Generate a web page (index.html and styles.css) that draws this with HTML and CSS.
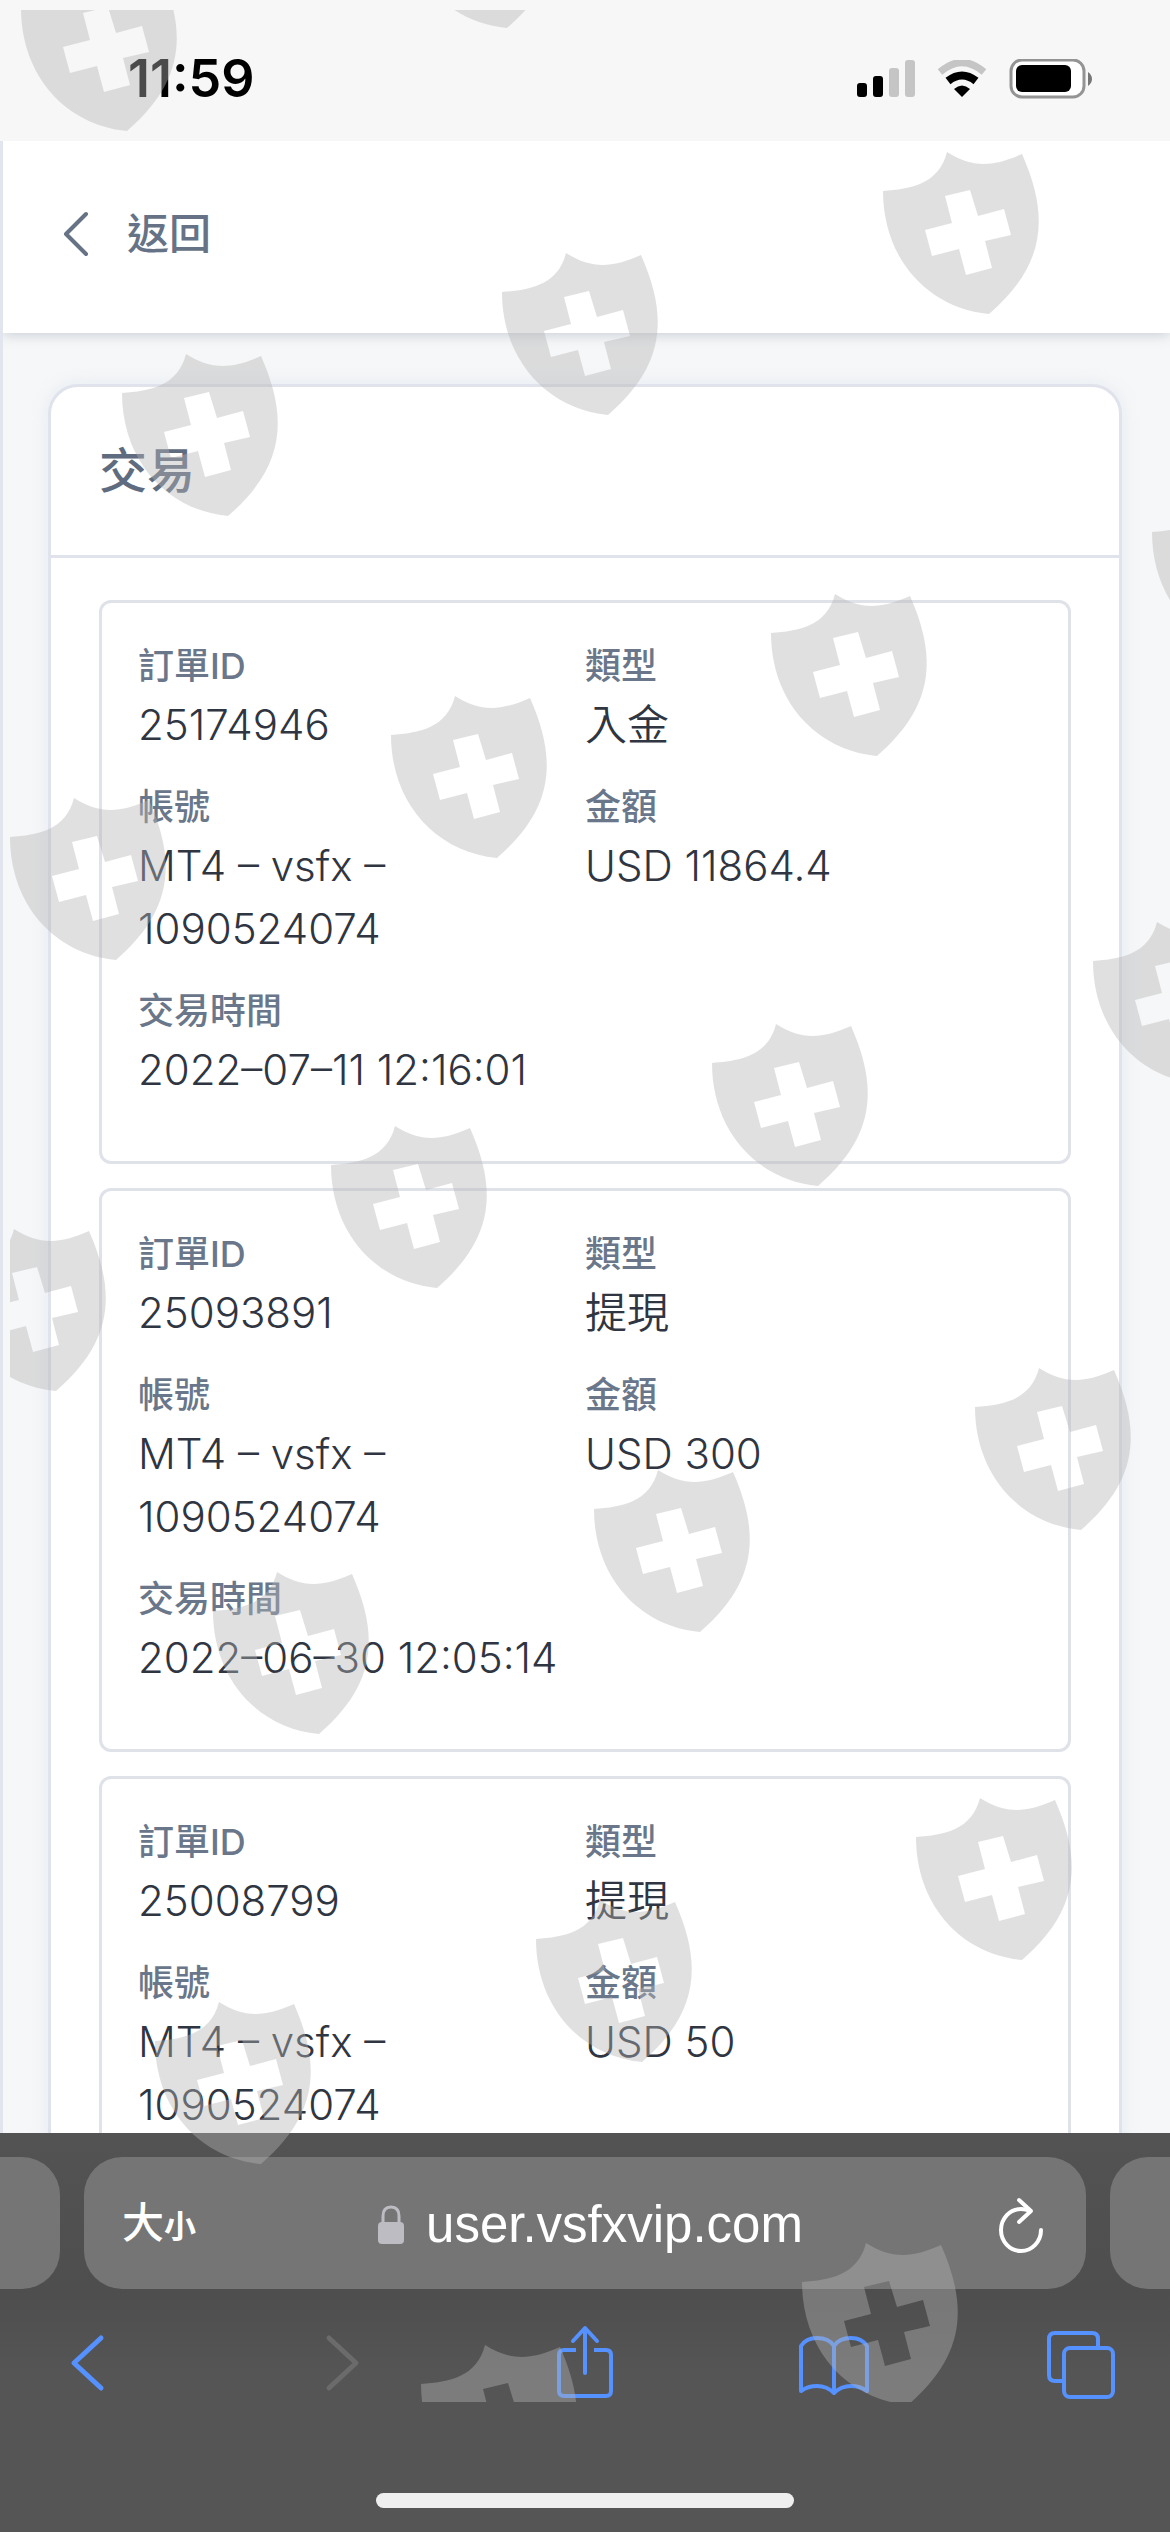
FILE: index.html
```html
<!DOCTYPE html>
<html lang="zh-Hant">
<head>
  <meta charset="UTF-8">
  <meta name="viewport" content="width=device-width, initial-scale=1">
  <title>交易</title>
  <link rel="stylesheet" href="styles.css">
</head>
<body>

<div class="status-bar">
  <span class="time">11:59</span>
  <div class="status-icons">
    <svg width="58" height="38" viewBox="0 0 58 38">
      <rect x="0" y="23" width="10" height="14" rx="3"/>
      <rect x="16" y="16" width="10" height="21" rx="3"/>
      <rect x="32" y="8" width="10" height="29" rx="3" fill="#c5c5c5"/>
      <rect x="48" y="0" width="10" height="37" rx="3" fill="#c5c5c5"/>
    </svg>
    <svg width="50" height="38" viewBox="0 0 50 38">
      <path d="M3 12 Q25 -7 47 12" fill="none" stroke="#c5c5c5" stroke-width="7"/>
      <path d="M11 21 Q25 10 39 21" fill="none" stroke="#000" stroke-width="8"/>
      <path d="M17 29 Q25 22 33 29 L25 37 Z"/>
    </svg>
    <svg width="83" height="40" viewBox="0 0 83 40">
      <rect x="2" y="1" width="73" height="37" rx="11" fill="#fff" stroke="#949494" stroke-width="3"/>
      <rect x="7" y="6" width="55" height="27" rx="6"/>
      <path d="M79 13 Q83 16 83 20 Q83 24 79 27 Z" fill="#777"/>
    </svg>
  </div>
</div>

<div class="page">
  <header class="page-header">
    <a href="#" class="back-link">
      <svg width="26" height="46" viewBox="0 0 26 46">
        <path d="M23 3 L3 23 L23 43" fill="none" stroke="currentColor" stroke-width="4" stroke-linecap="round" stroke-linejoin="round"/>
      </svg>
      <span>返回</span>
    </a>
  </header>

  <main>
    <section class="card">
      <h1 class="card-title">交易</h1>
      <div class="card-body">
        <dl class="record">
          <div><dt>訂單ID</dt><dd>25174946</dd></div>
          <div><dt>類型</dt><dd>入金</dd></div>
          <div><dt>帳號</dt><dd>MT4 – vsfx – 1090524074</dd></div>
          <div><dt>金額</dt><dd>USD 11864.4</dd></div>
          <div class="wide"><dt>交易時間</dt><dd>2022–07–11 12:16:01</dd></div>
        </dl>
        <dl class="record">
          <div><dt>訂單ID</dt><dd>25093891</dd></div>
          <div><dt>類型</dt><dd>提現</dd></div>
          <div><dt>帳號</dt><dd>MT4 – vsfx – 1090524074</dd></div>
          <div><dt>金額</dt><dd>USD 300</dd></div>
          <div class="wide"><dt>交易時間</dt><dd>2022–06–30 12:05:14</dd></div>
        </dl>
        <dl class="record">
          <div><dt>訂單ID</dt><dd>25008799</dd></div>
          <div><dt>類型</dt><dd>提現</dd></div>
          <div><dt>帳號</dt><dd>MT4 – vsfx – 1090524074</dd></div>
          <div><dt>金額</dt><dd>USD 50</dd></div>
        </dl>
      </div>
    </section>
  </main>
</div>

<footer class="browser-bar">
  <div class="tabs">
    <div class="tab-edge tab-prev"></div>
    <div class="address">
      <button type="button" class="text-size">大<small>小</small></button>
      <div class="url">
        <svg width="26" height="40" viewBox="0 0 26 40">
          <path d="M5 18 V11 Q5 2 13 2 Q21 2 21 11 V18" fill="none" stroke="#bdbcc2" stroke-width="3"/>
          <rect x="0" y="17" width="26" height="22" rx="4" fill="#bdbcc2"/>
        </svg>
        <input type="text" value="user.vsfxvip.com" aria-label="網址">
      </div>
      <button type="button" class="reload" aria-label="重新載入">
        <svg width="46" height="56" viewBox="0 0 46 56">
          <path d="M32 14 Q28 12 23 12 A20 21 0 1 0 43 33" fill="none" stroke="#fff" stroke-width="4" stroke-linecap="round"/>
          <path d="M21 3 L33 14 L21 25" fill="none" stroke="#fff" stroke-width="4" stroke-linecap="round" stroke-linejoin="round"/>
        </svg>
      </button>
    </div>
    <div class="tab-edge tab-next"></div>
  </div>

  <nav class="toolbar">
    <button type="button" aria-label="上一頁">
      <svg width="72" height="74" viewBox="0 0 72 74">
        <path d="M49 13 L22 38 L49 63" fill="none" stroke="currentColor" stroke-width="5" stroke-linecap="round" stroke-linejoin="round"/>
      </svg>
    </button>
    <button type="button" aria-label="下一頁" disabled>
      <svg width="72" height="74" viewBox="0 0 72 74">
        <path d="M28 13 L55 38 L28 63" fill="none" stroke="currentColor" stroke-width="5" stroke-linecap="round" stroke-linejoin="round"/>
      </svg>
    </button>
    <button type="button" aria-label="分享">
      <svg width="72" height="74" viewBox="0 0 72 74" fill="none" stroke="currentColor" stroke-width="4" stroke-linecap="round" stroke-linejoin="round">
        <path d="M27 25 H15 Q10 25 10 30 V66 Q10 71 15 71 H57 Q62 71 62 66 V30 Q62 25 57 25 H45" stroke-linecap="butt"/>
        <path d="M36 48 V4 M24 16 L36 3 L48 16"/>
      </svg>
    </button>
    <button type="button" aria-label="書籤">
      <svg width="72" height="74" viewBox="0 0 72 74" fill="none" stroke="currentColor" stroke-width="4" stroke-linejoin="round">
        <path d="M36 67 V21 Q31 13 19 13 Q8 13 3 21 V66 Q10 61 19 61 Q29 61 36 68 Q43 61 53 61 Q62 61 69 66 V21 Q64 13 53 13 Q41 13 36 21"/>
      </svg>
    </button>
    <button type="button" aria-label="標籤頁">
      <svg width="72" height="74" viewBox="0 0 72 74" fill="none" stroke="currentColor" stroke-width="4">
        <path d="M18 56 H9 Q3 56 3 50 V14 Q3 8 9 8 H46 Q52 8 52 14 V23"/>
        <rect x="18" y="23" width="49" height="49" rx="6"/>
      </svg>
    </button>
  </nav>

  <div class="home-indicator"></div>
</footer>

<!-- Watermark pattern -->
<div class="watermark" aria-hidden="true">
  <svg width="1200" height="2532" viewBox="10 10 1200 2532">
    <defs>
      <path id="shield" fill-rule="evenodd" d="M0 39 C28 37 56 32 64 0 C88 15 108 16 139 2 C166 63 164 112 106 162 C44 156 0 106 0 39 Z M62 44 L87 38 L95 64 L121 57 L128 83 L102 89 L109 116 L83 123 L76 97 L49 104 L42 78 L69 71 Z"/>
    </defs>
    <use href="#shield" x="21" y="-31"/>
    <use href="#shield" x="401" y="-134"/>
    <use href="#shield" x="883" y="152"/>
    <use href="#shield" x="502" y="253"/>
    <use href="#shield" x="122" y="354"/>
    <use href="#shield" x="1152" y="493"/>
    <use href="#shield" x="771" y="594"/>
    <use href="#shield" x="391" y="696"/>
    <use href="#shield" x="10" y="798"/>
    <use href="#shield" x="1093" y="922"/>
    <use href="#shield" x="712" y="1024"/>
    <use href="#shield" x="331" y="1126"/>
    <use href="#shield" x="-50" y="1229"/>
    <use href="#shield" x="975" y="1368"/>
    <use href="#shield" x="594" y="1470"/>
    <use href="#shield" x="213" y="1572"/>
    <use href="#shield" x="916" y="1798"/>
    <use href="#shield" x="536" y="1900"/>
    <use href="#shield" x="155" y="2002"/>
    <use href="#shield" x="802" y="2243"/>
    <use href="#shield" x="421" y="2345"/>
  </svg>
</div>

</body>
</html>
```
FILE: styles.css
```css
* {
  box-sizing: border-box;
}

body {
  margin: 0;
  height: 100vh;
  display: flex;
  flex-direction: column;
  position: relative;
  overflow: hidden;
  font-family: Inter, "Noto Sans CJK TC", sans-serif;
  color: #2f3541;
  background: #f6f7f8;
}

button {
  border: none;
  background: none;
  padding: 0;
  font-family: inherit;
  cursor: pointer;
}

svg {
  display: block;
}

/* Status bar */
.status-bar {
  flex: none;
  display: flex;
  justify-content: space-between;
  align-items: center;
  height: 141px;
  padding: 16px 78px 0 128px;
  background: #f7f7f7;
}

.time {
  font-size: 52px;
  font-weight: 600;
  line-height: 60px;
  color: #000;
}

.status-icons {
  display: flex;
  align-items: center;
  gap: 22px;
}

/* Page */
.page {
  flex: 1;
  min-height: 0;
  overflow: hidden;
  border-left: 3px solid #e2e5ed;
}

.page-header {
  display: flex;
  align-items: center;
  height: 192px;
  padding: 0 60px 6px;
  background: #fff;
  box-shadow: 0 2px 12px rgba(100,115,140,0.3);
}

.back-link {
  display: flex;
  align-items: center;
  gap: 38px;
  color: #667386;
  font-size: 42px;
  font-weight: 500;
  line-height: 60px;
  text-decoration: none;
}

main {
  padding: 51px 48px 48px 45px;
}

.card {
  background: #fff;
  border: 3px solid #e0e3eb;
  border-radius: 30px;
  box-shadow: 0 0 18px rgba(190,210,230,0.3);
}

.card-title {
  margin: 0;
  padding: 48px;
  border-bottom: 3px solid #e0e3eb;
  font-size: 48px;
  font-weight: 500;
  line-height: 72px;
  color: #5f6c80;
}

.card-body {
  display: flex;
  flex-direction: column;
  gap: 24px;
  padding: 42px 48px 48px;
}

.record {
  display: grid;
  grid-template-columns: 1fr 1fr;
  align-content: start;
  gap: 24px 0;
  min-height: 564px;
  margin: 0;
  padding: 36px;
  border: 3px solid #e0e2ea;
  border-radius: 12px;
}

.record .wide {
  grid-column: 1 / -1;
}

.record dt {
  font-size: 36px;
  font-weight: 500;
  line-height: 54px;
  color: #6a778a;
}

.record dd {
  margin: 0;
  font-size: 42px;
  font-weight: 350;
  line-height: 63px;
}

/* Browser bar */
.browser-bar {
  flex: none;
  padding: 24px 0;
  background: linear-gradient(#535353, #4e4e4e 160px, #555 240px);
}

.tabs {
  display: flex;
  gap: 24px;
  height: 132px;
}

.tab-edge {
  width: 60px;
  background: #757575;
}

.tab-prev {
  border-radius: 0 38px 38px 0;
}

.tab-next {
  border-radius: 38px 0 0 38px;
}

.address {
  flex: 1;
  display: flex;
  align-items: center;
  justify-content: space-between;
  padding: 4px 42px 0 38px;
  border-radius: 38px;
  background: #757575;
  color: #fff;
}

.text-size {
  color: #fff;
  font-size: 42px;
  font-weight: 500;
  line-height: 60px;
}

.text-size small {
  font-size: 32px;
  font-weight: 700;
}

.url {
  display: flex;
  align-items: center;
  gap: 22px;
}

.url input {
  width: 390px;
  padding: 0;
  border: none;
  background: none;
  color: #fff;
  font-family: "Liberation Sans", sans-serif;
  font-size: 51px;
  line-height: 60px;
}

.toolbar {
  display: flex;
  justify-content: space-between;
  padding: 36px 52px 0;
  color: #5591ff;
}

.toolbar button {
  color: inherit;
}

.toolbar button:disabled {
  color: #6b6b6b;
}

.home-indicator {
  width: 418px;
  height: 15px;
  margin: 94px auto 0;
  border-radius: 8px;
  background: #efefef;
}

/* Watermark */
.watermark {
  position: absolute;
  top: 10px;
  right: 0;
  bottom: 130px;
  left: 10px;
  overflow: hidden;
  pointer-events: none;
  fill: rgba(180,180,180,0.41);
}
```
